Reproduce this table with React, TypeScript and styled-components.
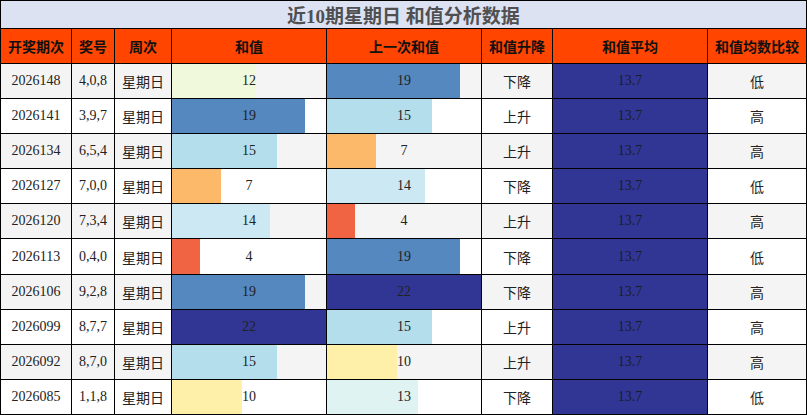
import React from "react";
import styled, { createGlobalStyle } from "styled-components";

const GlobalStyle = createGlobalStyle`
  html, body { margin: 0; padding: 0; background: #ffffff; }
  body { font-family: "Liberation Serif", "Noto Sans CJK SC", serif; }
`;

type Row = {
  issue: string;
  nums: string;
  week: string;
  sum: number;
  prev: number;
  trend: string;
  avg: string;
  cmp: string;
};

const rows: Row[] = [
  { issue: "2026148", nums: "4,0,8", week: "星期日", sum: 12, prev: 19, trend: "下降", avg: "13.7", cmp: "低" },
  { issue: "2026141", nums: "3,9,7", week: "星期日", sum: 19, prev: 15, trend: "上升", avg: "13.7", cmp: "高" },
  { issue: "2026134", nums: "6,5,4", week: "星期日", sum: 15, prev: 7, trend: "上升", avg: "13.7", cmp: "高" },
  { issue: "2026127", nums: "7,0,0", week: "星期日", sum: 7, prev: 14, trend: "下降", avg: "13.7", cmp: "低" },
  { issue: "2026120", nums: "7,3,4", week: "星期日", sum: 14, prev: 4, trend: "上升", avg: "13.7", cmp: "高" },
  { issue: "2026113", nums: "0,4,0", week: "星期日", sum: 4, prev: 19, trend: "下降", avg: "13.7", cmp: "低" },
  { issue: "2026106", nums: "9,2,8", week: "星期日", sum: 19, prev: 22, trend: "下降", avg: "13.7", cmp: "高" },
  { issue: "2026099", nums: "8,7,7", week: "星期日", sum: 22, prev: 15, trend: "上升", avg: "13.7", cmp: "高" },
  { issue: "2026092", nums: "8,7,0", week: "星期日", sum: 15, prev: 10, trend: "上升", avg: "13.7", cmp: "高" },
  { issue: "2026085", nums: "1,1,8", week: "星期日", sum: 10, prev: 13, trend: "下降", avg: "13.7", cmp: "低" },
];

const MAX = 22;

const barColor = (v: number): string => {
  const map: Record<number, string> = {
    4: "#f06443",
    7: "#fdb96a",
    10: "#fef0a8",
    12: "#f1f9dd",
    13: "#e0f3f3",
    14: "#cce8f2",
    15: "#b4deec",
    19: "#5588bf",
    22: "#313695",
  };
  return map[v] ?? "#cccccc";
};

const Table = styled.div`
  display: grid;
  grid-template-columns: 70px 42px 56px 154px 154px 70px 154px 98px;
  grid-template-rows: 27px 34px;
  grid-auto-rows: 34.1px;
  gap: 1px;
  padding: 1px;
  background: #000000;
  width: 807px;
  box-sizing: border-box;
`;

const Title = styled.div`
  grid-column: 1 / -1;
  background: #dde2f3;
  color: #505050;
  font-family: "Liberation Serif", "Noto Sans CJK SC", serif;
  font-weight: bold;
  font-size: 19px;
  display: flex;
  align-items: center;
  justify-content: center;
  white-space: pre;
`;

const Head = styled.div`
  background: #ff4500;
  color: #111111;
  font-family: "Noto Sans CJK SC", sans-serif;
  font-weight: bold;
  font-size: 14px;
  display: flex;
  align-items: center;
  justify-content: center;
`;

const Cell = styled.div<{ $alt: boolean; $cjk?: boolean }>`
  background: ${(p) => (p.$alt ? "#f4f4f4" : "#ffffff")};
  color: #222222;
  font-family: ${(p) =>
    p.$cjk ? '"Noto Sans CJK SC", sans-serif' : '"Liberation Serif", "Noto Sans CJK SC", serif'};
  font-size: 14px;
  display: flex;
  align-items: center;
  justify-content: center;
`;

const AvgCell = styled(Cell)`
  background: #313695;
  color: #1c1c2a;
`;

const BarCell = styled.div<{ $alt: boolean }>`
  background: ${(p) => (p.$alt ? "#f4f4f4" : "#ffffff")};
  display: grid;
  grid-template-areas: "stack";
  font-family: "Liberation Serif", serif;
  font-size: 14px;
  color: #222222;
`;

const Bar = styled.div`
  grid-area: stack;
  height: 100%;
`;

const BarLabel = styled.div`
  grid-area: stack;
  display: flex;
  align-items: center;
  justify-content: center;
`;

const ValueBar: React.FC<{ value: number; alt: boolean }> = ({ value, alt }) => (
  <BarCell $alt={alt}>
    <Bar style={{ width: `${(value / MAX) * 100}%`, background: barColor(value) }} />
    <BarLabel>{value}</BarLabel>
  </BarCell>
);

const headers = ["开奖期次", "奖号", "周次", "和值", "上一次和值", "和值升降", "和值平均", "和值均数比较"];

export default function App() {
  return (
    <>
      <GlobalStyle />
      <Table>
        <Title>近10期星期日 和值分析数据</Title>
        {headers.map((h) => (
          <Head key={h}>{h}</Head>
        ))}
        {rows.map((r, i) => {
          const alt = i % 2 === 0;
          return (
            <React.Fragment key={r.issue}>
              <Cell $alt={alt}>{r.issue}</Cell>
              <Cell $alt={alt}>{r.nums}</Cell>
              <Cell $alt={alt} $cjk>{r.week}</Cell>
              <ValueBar value={r.sum} alt={alt} />
              <ValueBar value={r.prev} alt={alt} />
              <Cell $alt={alt} $cjk>{r.trend}</Cell>
              <AvgCell $alt={alt}>{r.avg}</AvgCell>
              <Cell $alt={alt} $cjk>{r.cmp}</Cell>
            </React.Fragment>
          );
        })}
      </Table>
    </>
  );
}
